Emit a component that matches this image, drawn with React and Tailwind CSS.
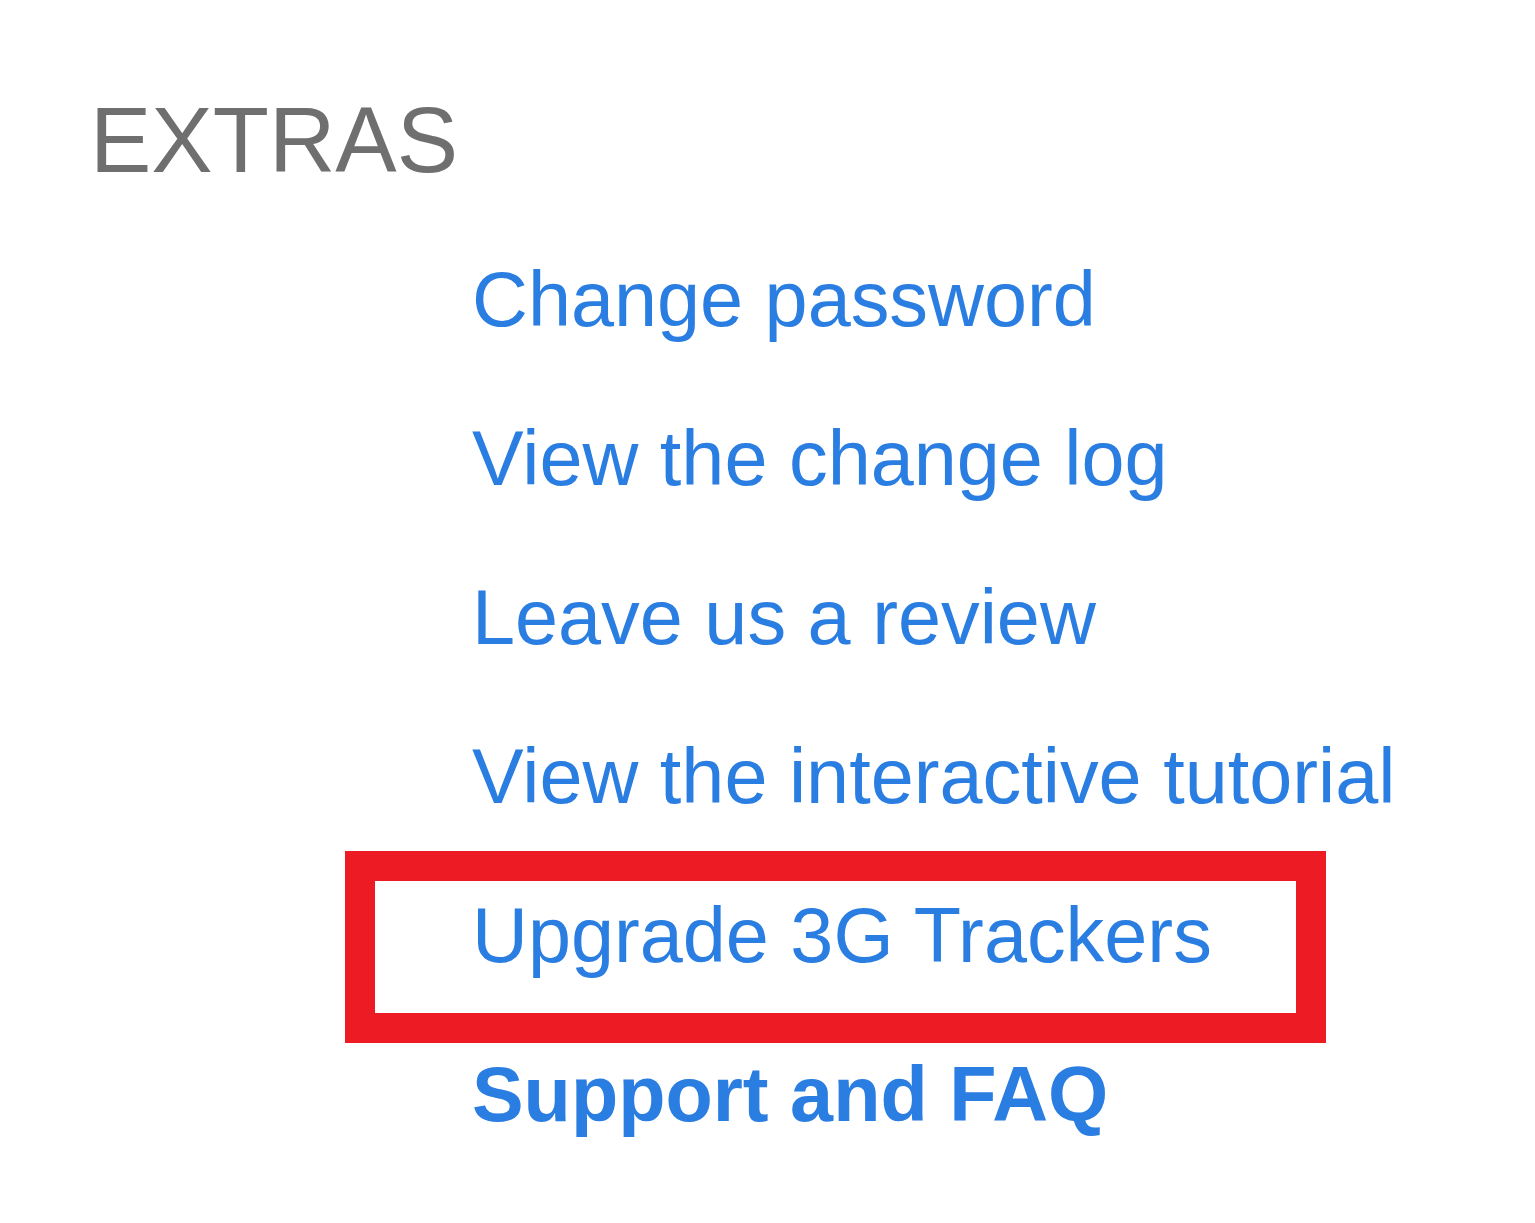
import React from 'react'

const links = [
    'Change password',
    'View the change log',
    'Leave us a review',
    'View the interactive tutorial',
]

function App() {
    return (
        <div className="min-h-[1223px] bg-white pt-[94px] pl-[90px]" style={{ fontFamily: '"Liberation Sans", Arial, sans-serif' }}>
            <h2 className="text-[92px] leading-none text-[#6f6f6f]">EXTRAS</h2>
            <ul className="mt-[34px] pl-[382px] text-[77.4px] leading-[159px] text-[#2a7de1]">
                {links.map((label) => (
                    <li key={label}><a href="#">{label}</a></li>
                ))}
                <li className="relative">
                    <a href="#">Upgrade 3G Trackers</a>
                    <div className="absolute left-[-127px] top-[-5px] h-[192px] w-[981px] border-[30px] border-[#ed1c24] pointer-events-none"></div>
                </li>
                <li><a href="#" className="font-bold">Support and FAQ</a></li>
            </ul>
        </div>
    )
}

export default App
